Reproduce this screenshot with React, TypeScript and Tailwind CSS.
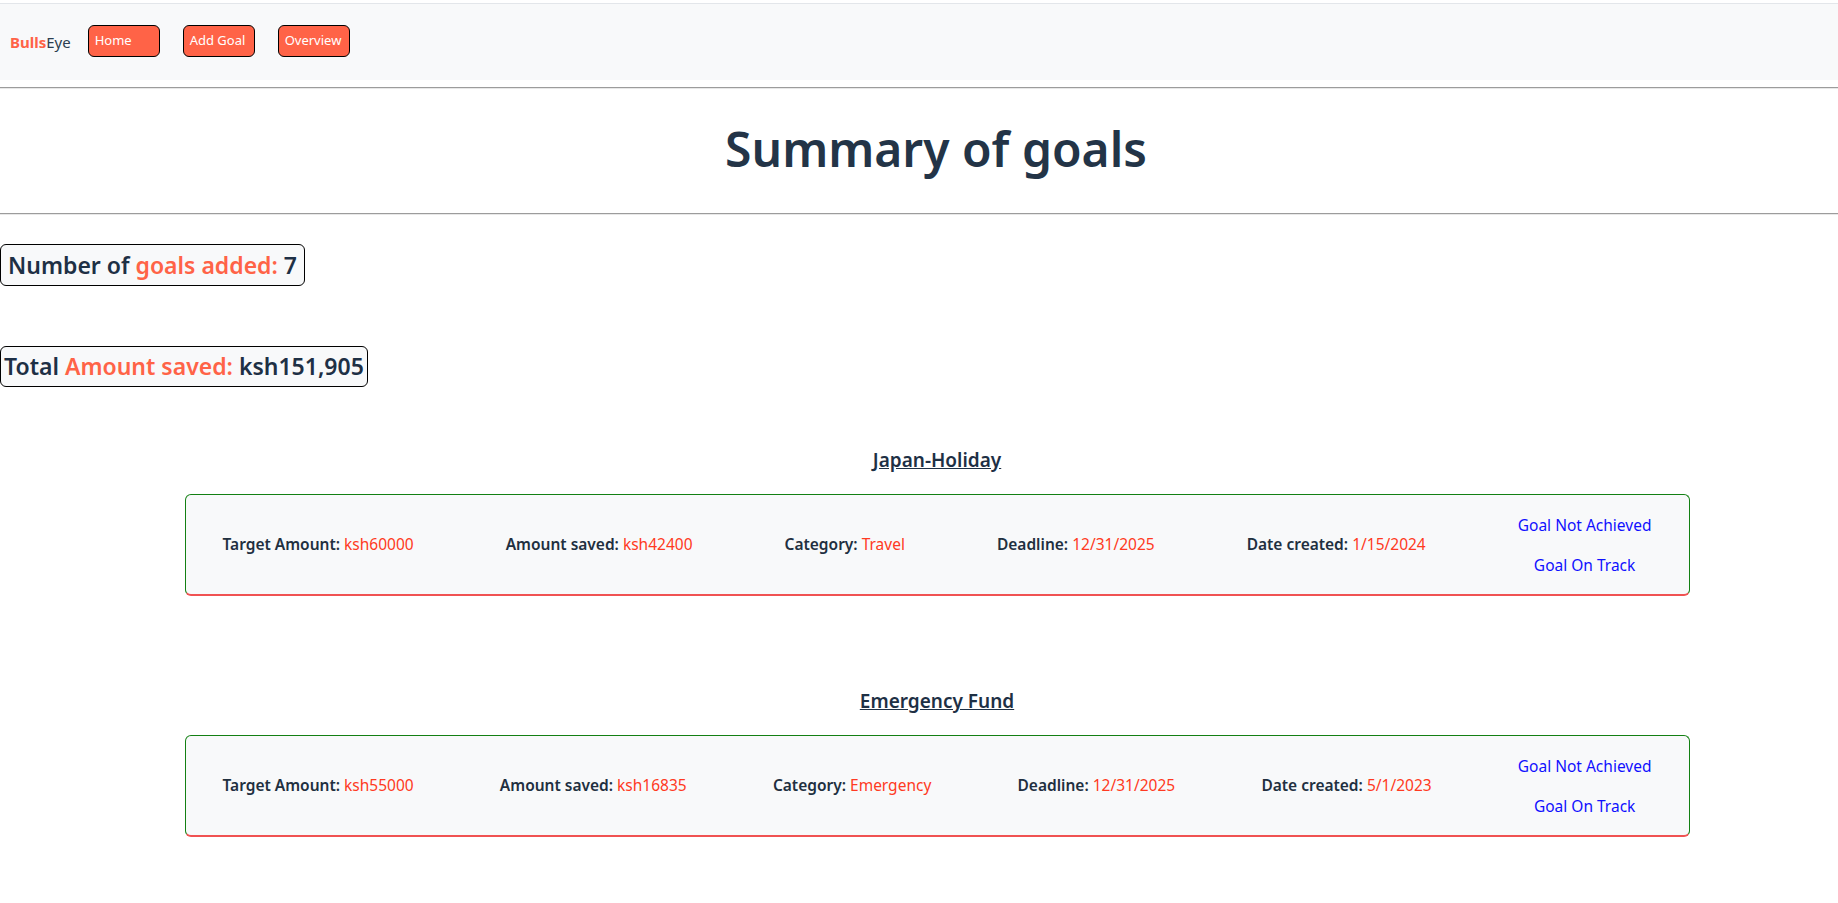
import React from 'react';

type Goal = {
  name: string;
  target: string;
  saved: string;
  category: string;
  deadline: string;
  created: string;
};

const goals: Goal[] = [
  { name: "Japan-Holiday", target: "ksh60000", saved: "ksh42400", category: "Travel", deadline: "12/31/2025", created: "1/15/2024" },
  { name: "Emergency Fund", target: "ksh55000", saved: "ksh16835", category: "Emergency", deadline: "12/31/2025", created: "5/1/2023" },
];

const Field = ({ label, value }: { label: string; value: string }) => (
  <p className="whitespace-nowrap">
    <span className="font-semibold text-[#212f3f]">{label}: </span>
    <span className="text-[#ff3a22]">{value}</span>
  </p>
);

const GoalCard = ({ goal }: { goal: Goal }) => (
  <div className="flex flex-col items-center">
    <h3 className="text-[19px] font-semibold text-[#1e3045] underline leading-6">{goal.name}</h3>
    <div className="mt-[22px] w-[1505px] h-[102px] flex items-center justify-between px-[37px] bg-[#f8f9fa] rounded-md border border-[#138013] border-b-2 border-b-[#f05252] text-[15.5px]">
      <Field label="Target Amount" value={goal.target} />
      <Field label="Amount saved" value={goal.saved} />
      <Field label="Category" value={goal.category} />
      <Field label="Deadline" value={goal.deadline} />
      <Field label="Date created" value={goal.created} />
      <div className="flex flex-col items-center gap-4 text-[#1010ff] leading-6 text-[15.5px]">
        <p>Goal Not Achieved</p>
        <p>Goal On Track</p>
      </div>
    </div>
  </div>
);

export default function App() {
  return (
    <div className="min-h-screen bg-white font-['Noto_Sans',sans-serif] text-[#1e3045]">
      <nav className="mt-[3px] h-[77px] border-t border-[#e3e6ea] bg-[#f8f9fa] flex items-center pl-[10px]">
        <span className="text-[15px] mr-[17px]">
          <span className="font-bold text-[#ff6347]">Bulls</span>
          <span className="text-[#2c3e50]">Eye</span>
        </span>
        <div className="flex gap-[23px] pb-[3px]">
          {["Home", "Add Goal", "Overview"].map((b) => (
            <button key={b} className="w-[72px] h-[32px] text-left pl-[6px] pt-[1px] text-[13px] text-white bg-[#ff6347] border border-black rounded-md">
              {b}
            </button>
          ))}
        </div>
      </nav>

      <div className="mt-[7px] border-t border-[#9c9c9c] border-b border-b-[#e8e8e8]" />
      <div className="h-[124px] flex items-center justify-center pl-[34px]">
        <h1 className="text-[48px] font-semibold text-[#233447] leading-none pb-[4px]">Summary of goals</h1>
      </div>
      <div className="border-t border-[#9c9c9c] border-b border-b-[#e8e8e8]" />

      <div className="mt-[29px] inline-flex items-center h-[42px] px-[7px] bg-[#f8f9fa] border border-black rounded-md text-[23px] font-semibold">
        Number of&nbsp;<span className="text-[#ff6347]">goals added:</span>&nbsp;7
      </div>
      <div className="h-[60px]" />
      <div className="inline-flex items-center h-[41px] px-[3px] bg-[#f8f9fa] border border-black rounded-md text-[23px] font-semibold">
        Total&nbsp;<span className="text-[#ff6347]">Amount saved:</span>&nbsp;ksh151,905
      </div>

      <div className="pl-[36px] mt-[61px] flex flex-col gap-[93px]">
        {goals.map((g) => (
          <GoalCard key={g.name} goal={g} />
        ))}
      </div>
    </div>
  );
}
